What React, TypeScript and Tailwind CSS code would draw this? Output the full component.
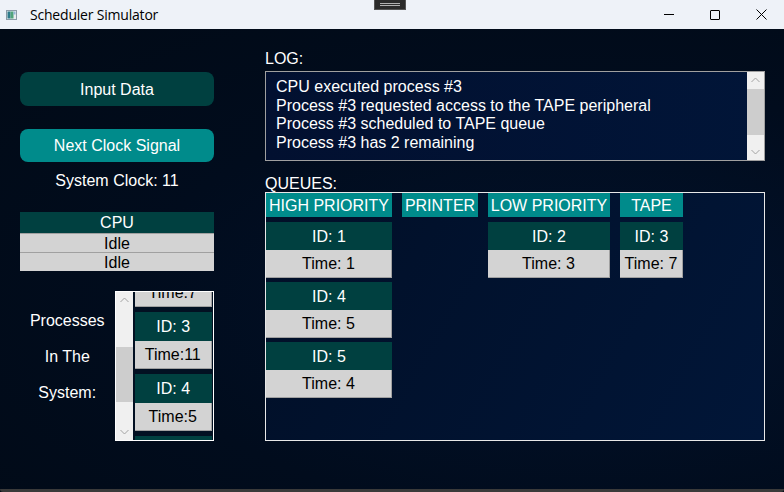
import React from "react";

const font = { fontFamily: '"Liberation Sans", Arial, sans-serif' };

function Chevron({ up }: { up?: boolean }) {
  return (
    <svg width="9" height="6" viewBox="0 0 9 6" className="block">
      <path
        d={up ? "M0.5 5 L4.5 1 L8.5 5" : "M0.5 1 L4.5 5 L8.5 1"}
        fill="none"
        stroke="#a3a3a3"
        strokeWidth="1"
      />
    </svg>
  );
}

function Scrollbar({ thumbTop, thumbH }: { thumbTop: number; thumbH: number }) {
  return (
    <div className="relative h-full w-[17px] bg-[#f0f0f0] shrink-0">
      <div className="absolute left-0 right-0 top-[5px] flex justify-center">
        <Chevron up />
      </div>
      <div
        className="absolute left-0 right-0 bg-[#cdcdcd]"
        style={{ top: thumbTop, height: thumbH }}
      />
      <div className="absolute left-0 right-0 bottom-[5px] flex justify-center">
        <Chevron />
      </div>
    </div>
  );
}

function QueueCard({ id, time }: { id: number; time: number }) {
  return (
    <div className="flex flex-col">
      <div className="h-[28px] pt-[1px] bg-[#004040] text-white flex items-center justify-center">
        ID: {id}
      </div>
      <div className="h-[28px] pt-[1px] bg-[#d3d3d3] text-black flex items-center justify-center border-b border-r border-[#a0a0a0]">
        Time: {time}
      </div>
    </div>
  );
}

function Queue({
  title,
  width,
  items,
}: {
  title: string;
  width: number;
  items: { id: number; time: number }[];
}) {
  return (
    <div className="flex flex-col gap-[4px] shrink-0" style={{ width }}>
      <div className="h-[24px] pt-[1px] bg-[#008b8b] text-white flex items-center justify-center mb-[1px] whitespace-nowrap">
        {title}
      </div>
      {items.map((it) => (
        <QueueCard key={it.id} id={it.id} time={it.time} />
      ))}
    </div>
  );
}

export default function App() {
  return (
    <div className="w-[784px] h-[492px] flex flex-col overflow-hidden bg-[#010a16]" style={font}>
      {/* Title bar */}
      <div className="relative h-[29px] bg-[#eef2f8] flex items-center shrink-0">
        <svg width="11" height="10" viewBox="0 0 11 10" className="ml-[6px]">
          <rect x="0.5" y="0.5" width="10" height="9" fill="#e8ecef" stroke="#8a9aa6" />
          <rect x="1.5" y="1.5" width="3" height="7" fill="#2d7a8a" />
          <rect x="4.5" y="1.5" width="3" height="7" fill="#4fa37a" />
          <rect x="7.5" y="1.5" width="2" height="3" fill="#8fb6d6" />
        </svg>
        <span
          className="ml-[13px] text-[14px] text-black tracking-[-0.2px]"
          style={{ fontFamily: '"Open Sans", "Noto Sans", sans-serif' }}
        >
          Scheduler Simulator
        </span>
        {/* snap handle */}
        <div className="absolute left-[374px] top-0 w-[32px] h-[10px] bg-[#2b2b2b] border border-[#555] border-t-0 flex flex-col items-center justify-center gap-[1px]">
          <div className="w-[20px] h-[1px] bg-[#b0b0b0]" />
          <div className="w-[20px] h-[1px] bg-[#b0b0b0]" />
        </div>
        <div className="ml-auto flex items-center h-full">
          <div className="w-[46px] h-full flex items-center justify-center">
            <div className="w-[10px] h-[1px] bg-black" />
          </div>
          <div className="w-[46px] h-full flex items-center justify-center">
            <div className="w-[10px] h-[10px] border border-black rounded-[1px]" />
          </div>
          <div className="w-[46px] h-full flex items-center justify-center">
            <svg width="11" height="11" viewBox="0 0 11 11">
              <path d="M0.5 0.5 L10.5 10.5 M10.5 0.5 L0.5 10.5" stroke="#000" strokeWidth="1" />
            </svg>
          </div>
        </div>
      </div>

      {/* Body */}
      <div className="flex-1 flex bg-[radial-gradient(ellipse_at_75%_60%,#02122c_0%,#010c1d_55%,#010a16_100%)] text-white text-[16px]">
        {/* Left column */}
        <div className="w-[214px] pl-[20px] pt-[43px] flex flex-col shrink-0">
          <div className="h-[34px] pt-[1px] rounded-[8px] bg-[#004040] flex items-center justify-center">
            Input Data
          </div>
          <div className="mt-[23px] h-[33px] pt-[1px] rounded-[8px] bg-[#008b8b] flex items-center justify-center">
            Next Clock Signal
          </div>
          <div className="mt-[10px] h-[18px] leading-[18px] text-center">System Clock: 11</div>
          <div className="mt-[22px] flex flex-col">
            <div className="h-[21px] pt-[1px] bg-[#004040] flex items-center justify-center">CPU</div>
            <div className="h-[19px] pt-[1px] bg-[#d3d3d3] border-t border-[#a0a0a0] text-black flex items-center justify-center">
              Idle
            </div>
            <div className="h-[19px] pt-[1px] bg-[#d3d3d3] border-t border-[#a0a0a0] text-black flex items-center justify-center">
              Idle
            </div>
          </div>
          <div className="mt-[20px] flex">
            <div className="w-[95px] flex flex-col items-center pt-[21px] gap-[18px]">
              <div className="h-[18px] leading-[18px]">Processes</div>
              <div className="h-[18px] leading-[18px]">In The</div>
              <div className="h-[18px] leading-[18px]">System:</div>
            </div>
            <div className="w-[100px] h-[150px] border border-white flex overflow-hidden bg-[#021022]">
              <Scrollbar thumbTop={55} thumbH={55} />
              <div className="flex-1 pl-[2px] pr-[1px] flex flex-col gap-[5px] overflow-hidden">
                <div className="-mt-[13px] h-[28px] shrink-0 bg-[#d3d3d3] text-black border-b border-r border-[#a0a0a0] flex items-center justify-center">
                  Time:7
                </div>
                <div className="flex flex-col shrink-0">
                  <div className="h-[29px] pt-[1px] bg-[#004040] flex items-center justify-center">ID: 3</div>
                  <div className="h-[28px] pt-[1px] bg-[#d3d3d3] text-black border-b border-r border-[#a0a0a0] flex items-center justify-center">
                    Time:11
                  </div>
                </div>
                <div className="flex flex-col shrink-0">
                  <div className="h-[29px] pt-[1px] bg-[#004040] flex items-center justify-center">ID: 4</div>
                  <div className="h-[28px] pt-[1px] bg-[#d3d3d3] text-black border-b border-r border-[#a0a0a0] flex items-center justify-center">
                    Time:5
                  </div>
                </div>
                <div className="h-[29px] shrink-0 bg-[#004040]" />
              </div>
            </div>
          </div>
        </div>

        {/* Right column */}
        <div className="ml-[51px] w-[500px] pt-[20px] flex flex-col shrink-0">
          <div className="h-[18px] leading-[18px] mb-[4px] pt-[1px]">LOG:</div>
          <div className="h-[90px] border border-[#a0a0a0] flex bg-[linear-gradient(90deg,#021030,#011538)]">
            <div className="flex-1 pl-[10px] pt-[6px] leading-[18.5px]">
              <div>CPU executed process #3</div>
              <div>Process #3 requested access to the TAPE peripheral</div>
              <div>Process #3 scheduled to TAPE queue</div>
              <div>Process #3 has 2 remaining</div>
            </div>
            <Scrollbar thumbTop={17} thumbH={46} />
          </div>
          <div className="mt-[13px] h-[18px] leading-[18px] pt-[1px]">QUEUES:</div>
          <div className="h-[249px] border border-[#e8e8e8] bg-[linear-gradient(120deg,#010f27,#011638)] flex gap-[10px] items-start">
            <Queue
              title="HIGH PRIORITY"
              width={126}
              items={[
                { id: 1, time: 1 },
                { id: 4, time: 5 },
                { id: 5, time: 4 },
              ]}
            />
            <Queue title="PRINTER" width={76} items={[]} />
            <Queue title="LOW PRIORITY" width={122} items={[{ id: 2, time: 3 }]} />
            <Queue title="TAPE" width={63} items={[{ id: 3, time: 7 }]} />
          </div>
        </div>
      </div>
      <div className="h-[3px] bg-[#3a3a3a] shrink-0 rounded-b-[6px]" />
    </div>
  );
}
